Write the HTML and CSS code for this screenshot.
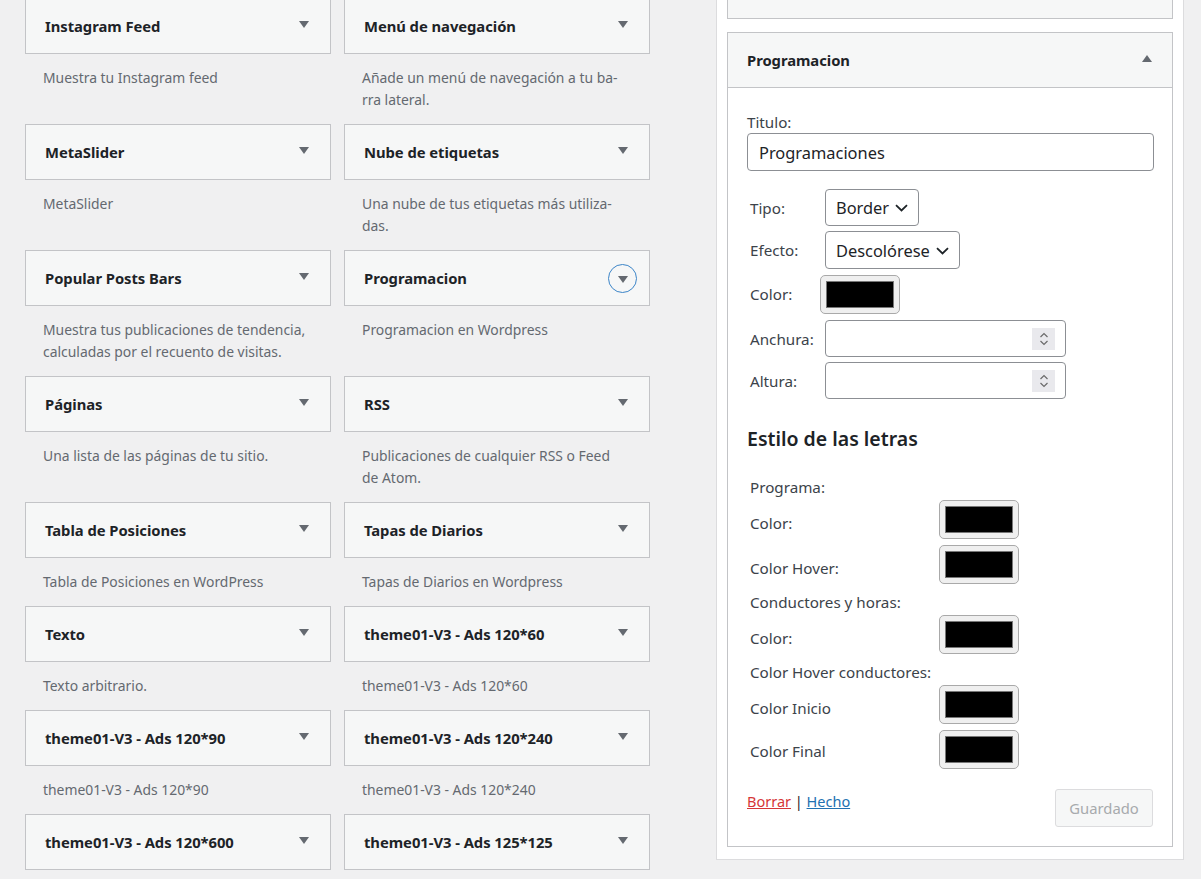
FILE: index.html
```html
<!DOCTYPE html>
<html lang="es">
<head>
<meta charset="utf-8">
<title>Widgets</title>
<link rel="stylesheet" href="styles.css">
</head>
<body>
<div class="page">
  <div class="left">
    <div class="grid">
      <div class="widget">
        <div class="card"><span class="wtitle">Instagram Feed</span><span class="arrow"></span></div>
        <div class="desc">Muestra tu Instagram feed</div>
      </div>
      <div class="widget">
        <div class="card"><span class="wtitle">Menú de navegación</span><span class="arrow"></span></div>
        <div class="desc">Añade un menú de navegación a tu ba-<br>rra lateral.</div>
      </div>
      <div class="widget">
        <div class="card"><span class="wtitle">MetaSlider</span><span class="arrow"></span></div>
        <div class="desc">MetaSlider</div>
      </div>
      <div class="widget">
        <div class="card"><span class="wtitle">Nube de etiquetas</span><span class="arrow"></span></div>
        <div class="desc">Una nube de tus etiquetas más utiliza-<br>das.</div>
      </div>
      <div class="widget">
        <div class="card"><span class="wtitle">Popular Posts Bars</span><span class="arrow"></span></div>
        <div class="desc">Muestra tus publicaciones de tendencia,<br>calculadas por el recuento de visitas.</div>
      </div>
      <div class="widget">
        <div class="card"><span class="wtitle">Programacion</span><span class="ring"><span class="arrow"></span></span></div>
        <div class="desc">Programacion en Wordpress</div>
      </div>
      <div class="widget">
        <div class="card"><span class="wtitle">Páginas</span><span class="arrow"></span></div>
        <div class="desc">Una lista de las páginas de tu sitio.</div>
      </div>
      <div class="widget">
        <div class="card"><span class="wtitle">RSS</span><span class="arrow"></span></div>
        <div class="desc">Publicaciones de cualquier RSS o Feed<br>de Atom.</div>
      </div>
      <div class="widget">
        <div class="card"><span class="wtitle">Tabla de Posiciones</span><span class="arrow"></span></div>
        <div class="desc">Tabla de Posiciones en WordPress</div>
      </div>
      <div class="widget">
        <div class="card"><span class="wtitle">Tapas de Diarios</span><span class="arrow"></span></div>
        <div class="desc">Tapas de Diarios en Wordpress</div>
      </div>
      <div class="widget">
        <div class="card"><span class="wtitle">Texto</span><span class="arrow"></span></div>
        <div class="desc">Texto arbitrario.</div>
      </div>
      <div class="widget">
        <div class="card"><span class="wtitle">theme01-V3 - Ads 120*60</span><span class="arrow"></span></div>
        <div class="desc">theme01-V3 - Ads 120*60</div>
      </div>
      <div class="widget">
        <div class="card"><span class="wtitle">theme01-V3 - Ads 120*90</span><span class="arrow"></span></div>
        <div class="desc">theme01-V3 - Ads 120*90</div>
      </div>
      <div class="widget">
        <div class="card"><span class="wtitle">theme01-V3 - Ads 120*240</span><span class="arrow"></span></div>
        <div class="desc">theme01-V3 - Ads 120*240</div>
      </div>
      <div class="widget">
        <div class="card"><span class="wtitle">theme01-V3 - Ads 120*600</span><span class="arrow"></span></div>
        <div class="desc">theme01-V3 - Ads 120*600</div>
      </div>
      <div class="widget">
        <div class="card"><span class="wtitle">theme01-V3 - Ads 125*125</span><span class="arrow"></span></div>
        <div class="desc">theme01-V3 - Ads 125*125</div>
      </div>
    </div>
  </div>

  <div class="right">
    <div class="panel">
      <div class="box">
        <div class="box-head"><span class="wtitle">publicidad</span></div>
      </div>
      <div class="box open">
        <div class="box-head"><span class="wtitle">Programacion</span><span class="arrow up"></span></div>
        <div class="box-body">
          <label class="lbl">Titulo:</label>
          <div class="text-input">Programaciones</div>

          <div class="form-rows">
            <div class="frow r-tipo">
              <span class="flabel">Tipo:</span>
              <div class="select w-border"><span>Border</span>
                <svg class="chev" width="13" height="8" viewBox="0 0 13 8"><path d="M1 1.2 L6.5 6.5 L12 1.2" fill="none" stroke="#1d2327" stroke-width="1.8"/></svg>
              </div>
            </div>
            <div class="frow r-efecto">
              <span class="flabel">Efecto:</span>
              <div class="select w-efecto"><span>Descolórese</span>
                <svg class="chev" width="13" height="8" viewBox="0 0 13 8"><path d="M1 1.2 L6.5 6.5 L12 1.2" fill="none" stroke="#1d2327" stroke-width="1.8"/></svg>
              </div>
            </div>
            <div class="frow r-color">
              <span class="flabel">Color:</span>
              <div class="swatch shift"><div class="swatch-in"></div></div>
            </div>
            <div class="frow r-num">
              <span class="flabel">Anchura:</span>
              <div class="num-input"><span class="spin">
                <svg width="10" height="16" viewBox="0 0 10 16"><path d="M1.5 6 L5 2.5 L8.5 6 M1.5 10 L5 13.5 L8.5 10" fill="none" stroke="#6b6b6b" stroke-width="1.2"/></svg>
              </span></div>
            </div>
            <div class="frow r-num">
              <span class="flabel">Altura:</span>
              <div class="num-input"><span class="spin">
                <svg width="10" height="16" viewBox="0 0 10 16"><path d="M1.5 6 L5 2.5 L8.5 6 M1.5 10 L5 13.5 L8.5 10" fill="none" stroke="#6b6b6b" stroke-width="1.2"/></svg>
              </span></div>
            </div>
          </div>

          <h3 class="section">Estilo de las letras</h3>

          <div class="style-rows">
            <div class="trow">Programa:</div>
            <div class="srow"><span class="slabel">Color:</span><div class="swatch"><div class="swatch-in"></div></div></div>
            <div class="srow"><span class="slabel">Color Hover:</span><div class="swatch"><div class="swatch-in"></div></div></div>
            <div class="trow">Conductores y horas:</div>
            <div class="srow"><span class="slabel">Color:</span><div class="swatch"><div class="swatch-in"></div></div></div>
            <div class="trow">Color Hover conductores:</div>
            <div class="srow"><span class="slabel">Color Inicio</span><div class="swatch"><div class="swatch-in"></div></div></div>
            <div class="srow"><span class="slabel lift">Color Final</span><div class="swatch"><div class="swatch-in"></div></div></div>
          </div>

          <div class="foot">
            <div class="links"><a class="del" href="#">Borrar</a> | <a class="done" href="#">Hecho</a></div>
            <div class="btn">Guardado</div>
          </div>
        </div>
      </div>
    </div>
  </div>
</div>
</body>
</html>
```

FILE: styles.css
```css
* { box-sizing: border-box; }

html, body {
  margin: 0;
  padding: 0;
  background: #f0f0f1;
  height: 100%;
  overflow: hidden;
}

body {
  font-family: "Noto Sans", "Open Sans", sans-serif;
  color: #1d2327;
}

.page {
  display: flex;
  align-items: flex-start;
}

.left {
  width: 716px;
  padding-left: 25px;
}

.grid {
  margin-top: -2px;
  display: grid;
  grid-template-columns: 306px 306px;
  column-gap: 13px;
}

.card {
  height: 56px;
  background: #f6f7f7;
  border: 1px solid #c3c4c7;
  display: flex;
  align-items: center;
  justify-content: space-between;
  padding: 0 21px 0 19px;
}

.wtitle {
  font-size: 14.8px;
  font-weight: 700;
  color: #1d2327;
  letter-spacing: -0.05px;
}

.arrow {
  width: 0;
  height: 0;
  border-left: 5px solid transparent;
  border-right: 5px solid transparent;
  border-top: 7px solid #646970;
  margin-top: -3px;
}

.arrow.up {
  border-top: 0;
  border-bottom: 7px solid #646970;
  margin-top: -4px;
}

.ring {
  width: 29px;
  height: 29px;
  margin-right: -9px;
  margin-top: 1px;
  border-radius: 50%;
  border: 1.5px solid #3c85c8;
  display: flex;
  align-items: center;
  justify-content: center;
}

.ring .arrow {
  margin-top: 2px;
}

.desc {
  padding: 13px 0 13px 18px;
  font-size: 13.9px;
  line-height: 22px;
  color: #646970;
  white-space: nowrap;
}

/* right panel */
.right {
  width: 468px;
}

.panel {
  margin-top: -39px;
  background: #fff;
  border: 1px solid #dcdcde;
  padding: 0 10px 12px;
  display: flex;
  flex-direction: column;
  gap: 13px;
}

.box {
  border: 1px solid #c3c4c7;
  background: #fff;
}

.box-head {
  height: 55px;
  background: #f6f7f7;
  display: flex;
  align-items: center;
  justify-content: space-between;
  padding: 0 20px 0 19px;
}

.box.open .box-head {
  border-bottom: 1px solid #c3c4c7;
}

.box-body {
  padding: 23px 18px 19px 19px;
  font-size: 15.2px;
}

.lbl {
  display: block;
  line-height: 22px;
  color: #3c434a;
}

.text-input {
  height: 38px;
  border: 1px solid #8c8f94;
  border-radius: 4px;
  padding: 0 11px;
  display: flex;
  align-items: center;
  font-size: 16.4px;
  color: #1d2327;
}

.form-rows {
  margin-top: 18px;
  padding-left: 3px;
  display: flex;
  flex-direction: column;
}

.frow {
  display: flex;
  align-items: center;
  color: #3c434a;
}

.r-tipo { height: 37px; }
.r-efecto { height: 38px; margin-top: 5px; }
.r-color { height: 42px; margin-top: 4px; }
.r-num { height: 37px; margin-top: 5px; }

.flabel {
  width: 75px;
  flex: none;
}

.select {
  height: 100%;
  border: 1px solid #8c8f94;
  border-radius: 4px;
  display: flex;
  align-items: center;
  justify-content: space-between;
  padding: 0 10px 0 10px;
  font-size: 16.4px;
  color: #1d2327;
}

.w-border { width: 94px; }
.w-efecto { width: 135px; }

.chev { flex: none; margin-top: 1px; }

.swatch {
  width: 80px;
  height: 39px;
  border: 1px solid #a9a9a9;
  border-radius: 5px;
  background: #efefef;
  padding: 5px 5px;
  flex: none;
}

.swatch.shift { margin-left: -5px; }

.swatch-in {
  width: 100%;
  height: 100%;
  background: #000;
  border: 1px solid #777;
}

.num-input {
  width: 241px;
  height: 37px;
  border: 1px solid #8c8f94;
  border-radius: 4px;
  display: flex;
  align-items: center;
  justify-content: flex-end;
  padding-right: 10px;
}

.spin {
  width: 23px;
  height: 22px;
  background: #e9e9ed;
  display: flex;
  align-items: center;
  justify-content: center;
}

.section {
  margin: 27px 0 0;
  font-size: 19.5px;
  line-height: 26px;
  font-weight: 600;
  color: #1d2327;
}

.style-rows {
  margin-top: 24px;
  padding-left: 3px;
  display: flex;
  flex-direction: column;
  gap: 3px;
  color: #3c434a;
}

.trow {
  height: 22px;
  line-height: 22px;
}

.srow {
  display: flex;
  align-items: center;
}

.srow + .srow { margin-top: 3px; }

.srow + .trow { margin-top: 4px; }

.trow + .srow { margin-top: -1px; }

.slabel {
  width: 189px;
  flex: none;
  padding-top: 6px;
}

.slabel.lift { padding-top: 2px; }

.foot {
  margin-top: 20px;
  display: flex;
  justify-content: space-between;
  align-items: flex-start;
}

.links {
  padding-top: 1px;
  line-height: 22px;
  font-size: 14.5px;
  color: #1d2327;
}

.links a { text-decoration: underline; }
.del { color: #d63638; }
.done { color: #2271b1; }

.btn {
  width: 98px;
  height: 38px;
  border: 1px solid #dcdcde;
  border-radius: 3px;
  background: #f6f7f7;
  color: #a7aaad;
  display: flex;
  align-items: center;
  justify-content: center;
  font-size: 14.8px;
  margin-right: 1px;
}
```
